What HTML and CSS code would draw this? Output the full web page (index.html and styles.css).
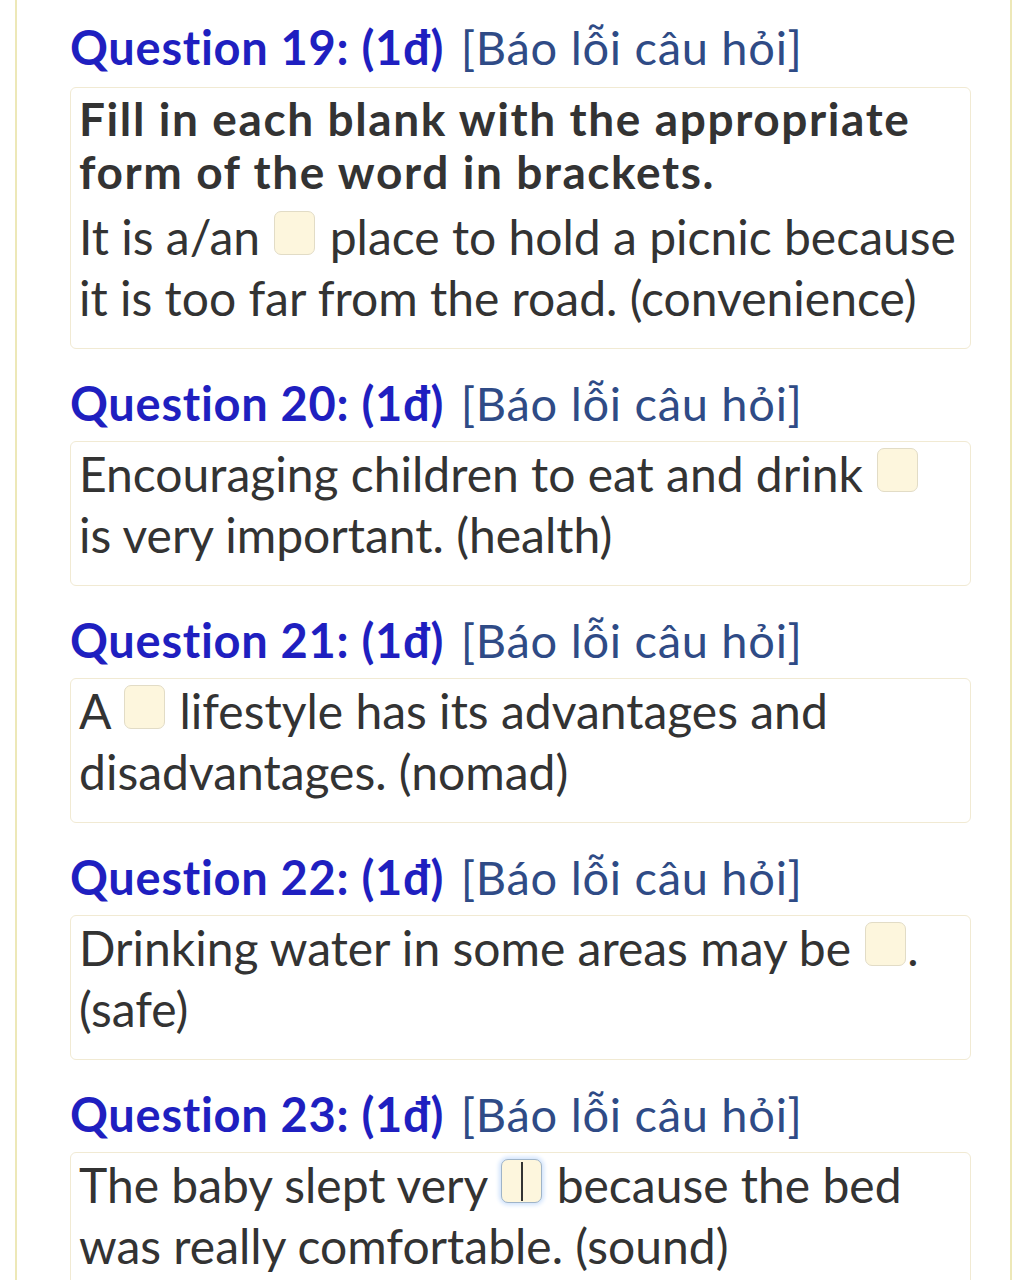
FILE: index.html
```html
<!DOCTYPE html>
<html>
<head>
<meta charset="utf-8">
<link rel="stylesheet" href="styles.css">
</head>
<body>
<div class="frame">
  <div class="q">
    <div class="qhead"><b>Question 19: (1đ)</b> <span class="report">[Báo lỗi câu hỏi]</span></div>
    <div class="card">
      <div class="title">Fill in each blank with the appropriate form of the word in brackets.</div>
      <div class="body">It is a/an <span class="blank"></span> place to hold a picnic because<br>it is too far from the road. (convenience)</div>
    </div>
  </div>
  <div class="q">
    <div class="qhead"><b>Question 20: (1đ)</b> <span class="report">[Báo lỗi câu hỏi]</span></div>
    <div class="card">
      <div class="body">Encouraging children to eat and drink <span class="blank"></span><br>is very important. (health)</div>
    </div>
  </div>
  <div class="q">
    <div class="qhead"><b>Question 21: (1đ)</b> <span class="report">[Báo lỗi câu hỏi]</span></div>
    <div class="card">
      <div class="body">A <span class="blank"></span> lifestyle has its advantages and<br>disadvantages. (nomad)</div>
    </div>
  </div>
  <div class="q">
    <div class="qhead"><b>Question 22: (1đ)</b> <span class="report">[Báo lỗi câu hỏi]</span></div>
    <div class="card">
      <div class="body">Drinking water in some areas may be <span class="blank tight"></span>.<br>(safe)</div>
    </div>
  </div>
  <div class="q">
    <div class="qhead"><b>Question 23: (1đ)</b> <span class="report">[Báo lỗi câu hỏi]</span></div>
    <div class="card">
      <div class="body">The baby slept very <span class="blank focus"><span class="caret"></span></span> because the bed<br>was really comfortable. (sound)</div>
    </div>
  </div>
</div>
</body>
</html>
```
FILE: styles.css
```css
html, body {
  margin: 0;
  padding: 0;
  background: #ffffff;
}
body {
  font-family: Lato, "Noto Sans", sans-serif;
  color: #333333;
}
.frame {
  margin-left: 15px;
  width: 997px;
  min-height: 1280px;
  border-left: 2px solid #ede8b8;
  border-right: 2px solid #ede8b8;
  padding: 17px 39px 0 53px;
  box-sizing: border-box;
  overflow: hidden;
}
.q + .q .qhead {
  margin-top: 24px;
}
.qhead {
  font-size: 47px;
  letter-spacing: 0.7px;
  line-height: 60px;
  height: 60px;
  margin-bottom: 8px;
  white-space: nowrap;
}
.q:first-child .qhead {
  margin-bottom: 10px;
}
.qhead b {
  color: #1f1fc0;
  font-weight: 700;
}
.report {
  color: #2f4b86;
  margin-left: 4px;
}
.card {
  border: 1px solid #f1ead3;
  border-radius: 6px;
  padding: 1px 2px 20px 8px;
}
.title {
  font-weight: 700;
  font-size: 46px;
  letter-spacing: 1.6px;
  line-height: 53px;
  margin-bottom: 8px;
  padding-top: 3px;
  color: #333;
}
.body {
  font-size: 48px;
  line-height: 61px;
  white-space: nowrap;
}
.blank {
  display: inline-block;
  width: 39px;
  height: 42px;
  background: #fdf6dd;
  border: 1px solid #e2dcc6;
  border-radius: 7px;
  vertical-align: 0;
  margin: 0 2px;
  position: relative;
}
.blank.tight {
  margin-right: 1px;
}
.blank.focus {
  border-color: #9fb4c8;
  box-shadow: 0 0 4px 2px #cfe2fb;
}
.caret {
  position: absolute;
  left: 19px;
  top: 2px;
  width: 2px;
  height: 39px;
  background: #333;
}
```
